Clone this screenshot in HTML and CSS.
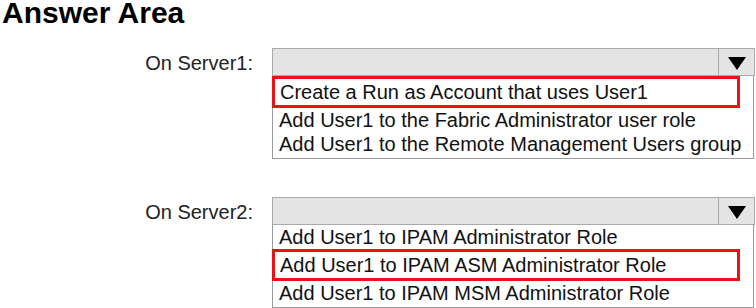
FILE: index.html
```html
<!DOCTYPE html>
<html lang="en">
<head>
    <meta charset="UTF-8">
    <meta name="viewport" content="width=device-width, initial-scale=1.0">
    <title>Answer Area</title>
    <link rel="stylesheet" href="styles.css">
</head>
<body>
    <h1>Answer Area</h1>

    <div class="question server1">
        <div class="label">On Server1:</div>
        <div class="dropdown">
            <div class="select">
                <span class="arrow">
                    <svg width="20" height="15" viewBox="0 0 20 15"><path d="M1 1H19L10 14Z" fill="#000"/></svg>
                </span>
            </div>
            <ul class="options">
                <li class="picked">Create a Run as Account that uses User1</li>
                <li>Add User1 to the Fabric Administrator user role</li>
                <li>Add User1 to the Remote Management Users group</li>
            </ul>
        </div>
    </div>

    <div class="question server2">
        <div class="label">On Server2:</div>
        <div class="dropdown">
            <div class="select">
                <span class="arrow">
                    <svg width="20" height="15" viewBox="0 0 20 15"><path d="M1 1H19L10 14Z" fill="#000"/></svg>
                </span>
            </div>
            <ul class="options">
                <li>Add User1 to IPAM Administrator Role</li>
                <li class="picked">Add User1 to IPAM ASM Administrator Role</li>
                <li>Add User1 to IPAM MSM Administrator Role</li>
            </ul>
        </div>
    </div>
</body>
</html>
```

FILE: styles.css
```css
body {
    margin: 0;
    font-family: "Liberation Sans", Arial, sans-serif;
    color: #111;
    background-color: #fff;
    overflow: hidden;
}
h1 {
    margin: 0;
    padding: 1px 0 0 2px;
    font-size: 30px;
    line-height: 23px;
    font-weight: bold;
    color: #000;
}
.question {
    display: flex;
    align-items: flex-start;
}
.server1 {
    margin-top: 24px;
}
.server2 {
    margin-top: 38px;
}
.label {
    width: 253px;
    padding-top: 1px;
    text-align: right;
    font-size: 20px;
    line-height: 28px;
    color: #222;
}
.dropdown {
    width: 483px;
    margin-left: 19px;
}
.select {
    height: 26px;
    border: 1px solid #a9a9a9;
    background-color: #e4e4e4;
    display: flex;
    justify-content: flex-end;
}
.arrow {
    width: 35px;
    border-left: 1px solid #a9a9a9;
    display: flex;
    align-items: center;
    justify-content: center;
    padding-top: 2px;
}
.options {
    list-style: none;
    margin: 0 1px 0 0;
    padding: 0 0 2px 0;
    border: 1px solid #9a9a9a;
    border-top: none;
}
.options li {
    font-size: 20px;
    line-height: 24px;
    padding-left: 6px;
    white-space: nowrap;
}
.options li.picked {
    box-sizing: border-box;
    width: 468px;
    margin-left: -1px;
    padding: 1px 0 1px 5px;
    border: 3px solid #ee1111;
}
```
